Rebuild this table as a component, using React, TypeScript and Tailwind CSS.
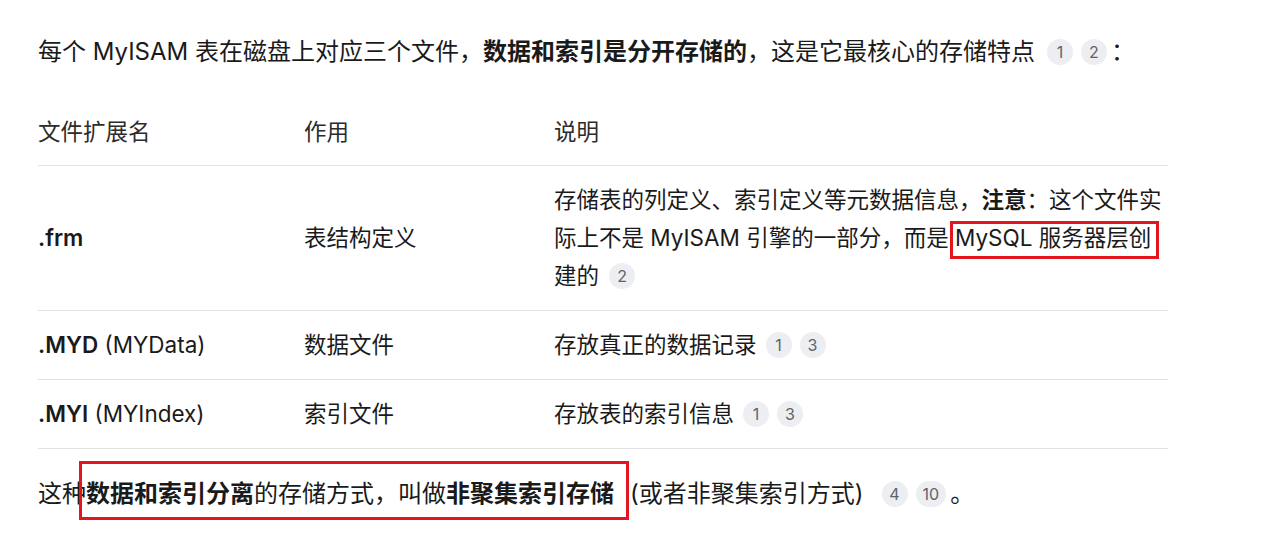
import type { ReactNode } from 'react'

const font = { fontFamily: 'Inter, "Noto Sans CJK SC", sans-serif' }

function Cite({ n }: { n: string }) {
  return (
    <span className="mx-[4px] inline-flex h-[26px] min-w-[26px] items-center justify-center rounded-full bg-[#eceef1] px-[7px] align-[2px] text-[16px] leading-none text-[#5f6368]">
      {n}
    </span>
  )
}

function Mark({ children, className }: { children: ReactNode; className: string }) {
  return (
    <span className="relative">
      {children}
      <span className={`pointer-events-none absolute border-[3px] border-[#e3161f] ${className}`} />
    </span>
  )
}

const rows = [
  {
    ext: <b className="font-semibold">.frm</b>,
    use: '表结构定义',
    desc: (
      <>
        存储表的列定义、索引定义等元数据信息，<b className="font-semibold">注意</b>：这个文件实
        <br />
        际上不是 MyISAM 引擎的一部分，而是{' '}
        <Mark className="-left-[5px] -right-[8px] -top-[3px] -bottom-[8px]">MySQL 服务器层创</Mark>
        <br />
        建的
        <span className="ml-[6px]" />
        <Cite n="2" />
      </>
    ),
  },
  {
    ext: (
      <>
        <b className="font-semibold">.MYD</b> (MYData)
      </>
    ),
    use: '数据文件',
    desc: (
      <>
        存放真正的数据记录
        <span className="ml-[5px]" />
        <Cite n="1" />
        <Cite n="3" />
      </>
    ),
  },
  {
    ext: (
      <>
        <b className="font-semibold">.MYI</b> (MYIndex)
      </>
    ),
    use: '索引文件',
    desc: (
      <>
        存放表的索引信息
        <span className="ml-[5px]" />
        <Cite n="1" />
        <Cite n="3" />
      </>
    ),
  },
]

export default function App() {
  return (
    <div className="min-h-[546px] bg-white text-[#1a1a1a]" style={font}>
      <div className="ml-[38px] w-[1130px] pt-[31px]">
        <p className="whitespace-nowrap text-[24px] leading-[42px]">
          每个 MyISAM 表在磁盘上对应三个文件，<b className="font-semibold">数据和索引是分开存储的</b>
          ，这是它最核心的存储特点
          <span className="ml-[8px]" />
          <Cite n="1" />
          <Cite n="2" />：
        </p>

        <table className="mt-[26px] w-[1130px] table-fixed border-collapse text-[22.5px] leading-[38px]">
          <colgroup>
            <col className="w-[266px]" />
            <col className="w-[250px]" />
            <col className="w-[614px]" />
          </colgroup>
          <thead>
            <tr className="border-b border-[#e3e3e3] text-left">
              <th className="py-[14px] font-normal text-[#2b2b2b]">文件扩展名</th>
              <th className="py-[14px] font-normal text-[#2b2b2b]">作用</th>
              <th className="py-[14px] font-normal text-[#2b2b2b]">说明</th>
            </tr>
          </thead>
          <tbody>
            {rows.map((r, i) => (
              <tr key={i} className="border-b border-[#e3e3e3] align-middle">
                <td className="py-[15px]">{r.ext}</td>
                <td className="py-[15px]">{r.use}</td>
                <td className="whitespace-nowrap py-[15px]">{r.desc}</td>
              </tr>
            ))}
          </tbody>
        </table>

        <p className="mt-[24px] whitespace-nowrap text-[24px] leading-[42px]">
          这种
          <Mark className="-left-[7px] -right-[15px] -top-[18px] -bottom-[12px]">
            <b className="font-semibold">数据和索引分离</b>的存储方式，叫做<b className="font-semibold">非聚集索引存储</b>
          </Mark>
          <span className="ml-[16px]">(或者非聚集索引方式)</span>
          <span className="ml-[14px]" />
          <Cite n="4" />
          <Cite n="10" />。
        </p>
      </div>
    </div>
  )
}
